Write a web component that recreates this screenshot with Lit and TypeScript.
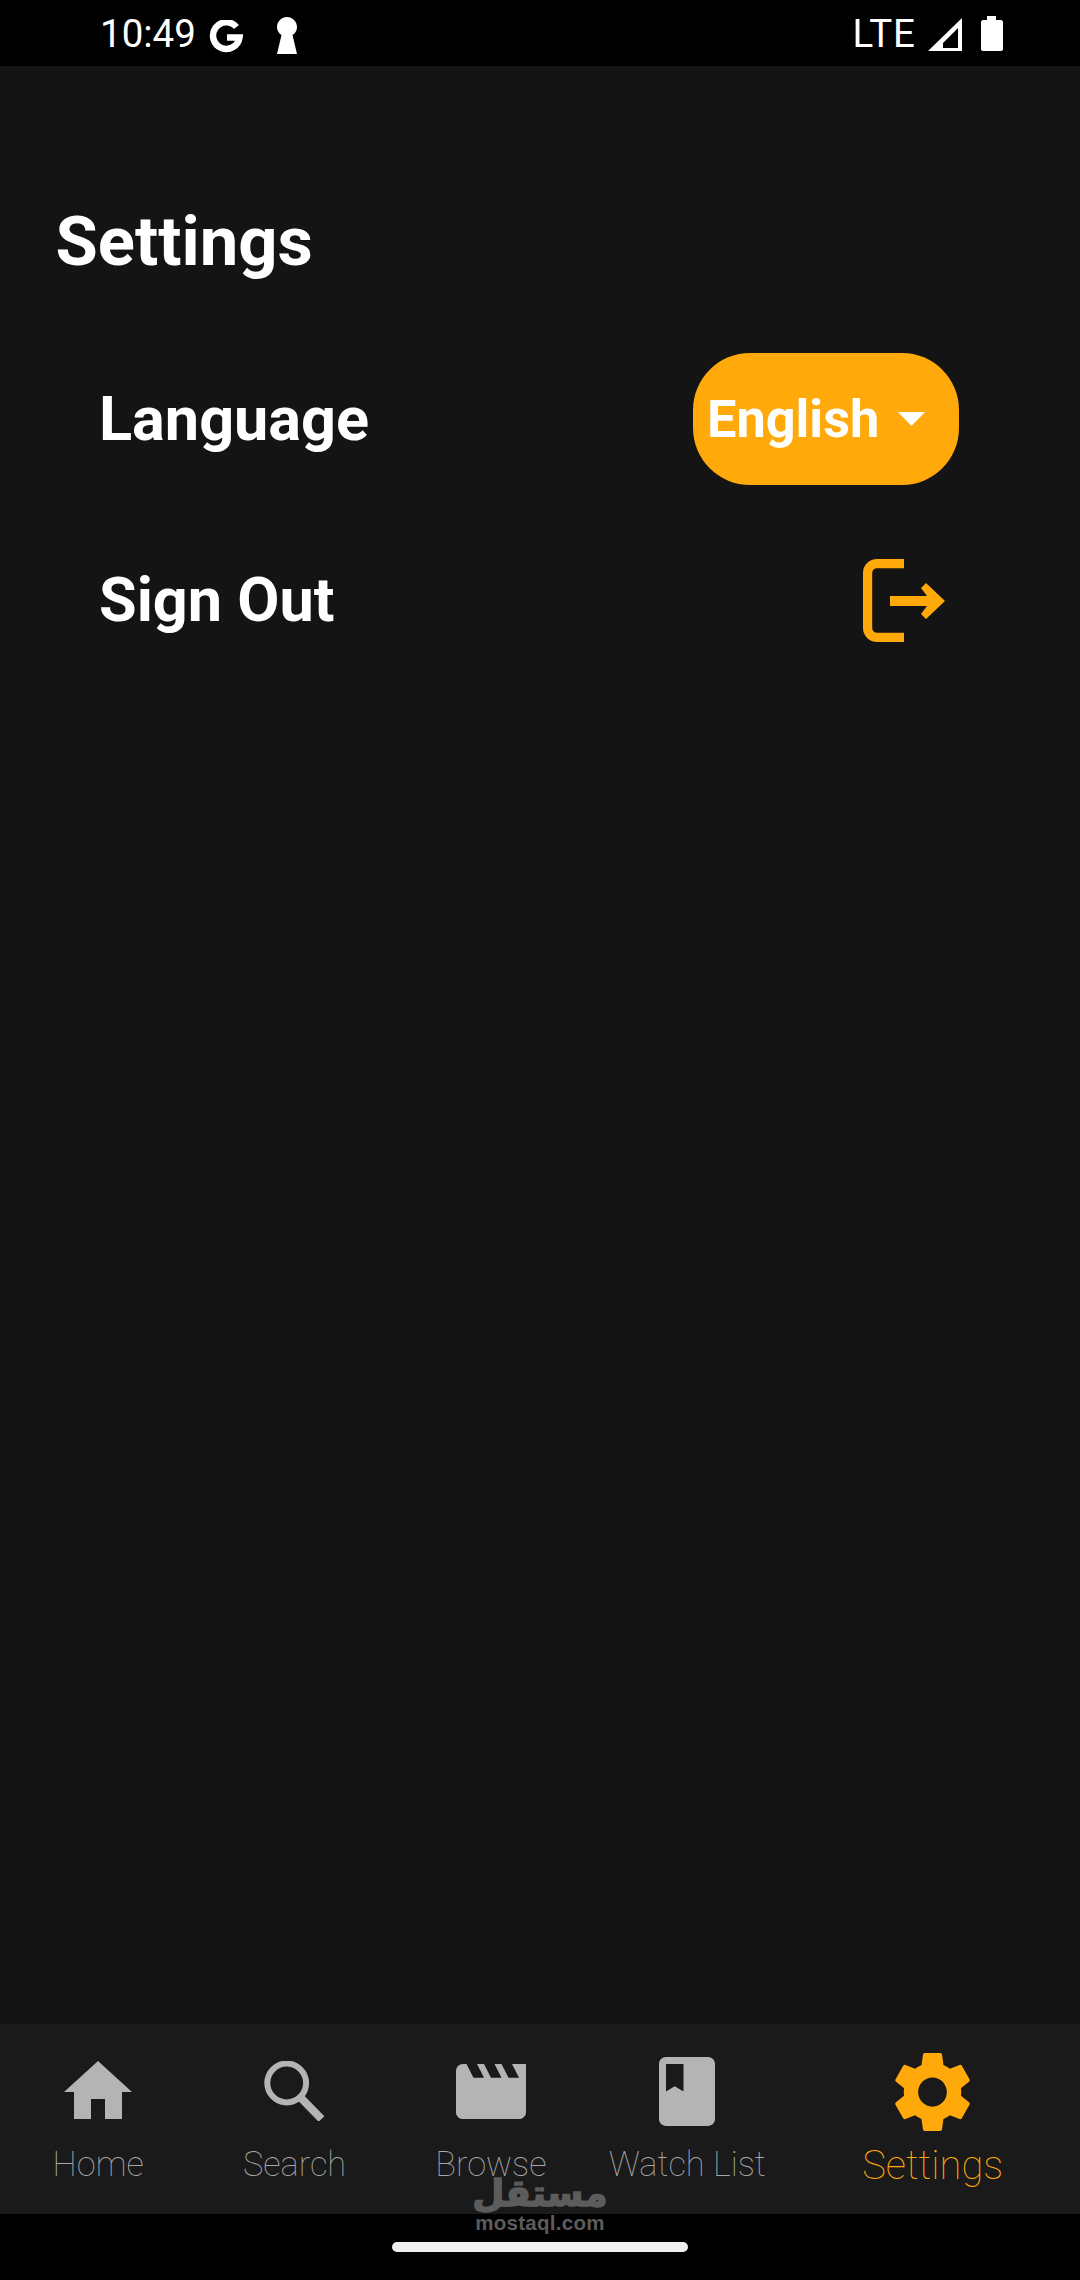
import { LitElement, html, css } from "lit";
import { customElement } from "lit/decorators.js";

const gear = "M19.14,12.94c0.04-0.3,0.06-0.61,0.06-0.94c0-0.32-0.02-0.64-0.07-0.94l2.03-1.58c0.18-0.14,0.23-0.41,0.12-0.61 l-1.92-3.32c-0.12-0.22-0.37-0.29-0.59-0.22l-2.39,0.96c-0.5-0.38-1.03-0.7-1.62-0.94L14.4,2.81c-0.04-0.24-0.24-0.41-0.48-0.41 h-3.84c-0.24,0-0.43,0.17-0.47,0.41L9.25,5.35C8.66,5.59,8.12,5.92,7.63,6.29L5.24,5.33c-0.22-0.08-0.47,0-0.59,0.22L2.74,8.87 C2.62,9.08,2.66,9.34,2.86,9.48l2.03,1.58C4.84,11.36,4.8,11.69,4.8,12s0.02,0.64,0.07,0.94l-2.03,1.58 c-0.18,0.14-0.23,0.41-0.12,0.61l1.92,3.32c0.12,0.22,0.37,0.29,0.59,0.22l2.39-0.96c0.5,0.38,1.03,0.7,1.62,0.94l0.36,2.54 c0.05,0.24,0.24,0.41,0.48,0.41h3.84c0.24,0,0.44-0.17,0.47-0.41l0.36-2.54c0.59-0.24,1.13-0.56,1.62-0.94l2.39,0.96 c0.22,0.08,0.47,0,0.59-0.22l1.92-3.32c0.12-0.22,0.07-0.47-0.12-0.61L19.14,12.94z M12,15.6c-1.98,0-3.6-1.62-3.6-3.6 s1.62-3.6,3.6-3.6s3.6,1.62,3.6,3.6S13.98,15.6,12,15.6z";

@customElement("app-root")
export class AppRoot extends LitElement {
  static styles = css`
    :host { display: block; width: 1080px; height: 2280px; background: #141414; font-family: Roboto, sans-serif; color: #fff; position: relative; overflow: hidden; }
    svg { display: block; flex: none; }
    .page { display: flex; flex-direction: column; height: 2280px; }
    .status { height: 66px; background: #000; display: flex; align-items: center; padding: 0 77px 0 100px; flex: none; }
    .time { font-size: 38.5px; line-height: 67px; width: 109px; }
    .g { margin-top: 7px; }
    .key { margin: 5px 0 0 34px; }
    .spacer { flex: 1; }
    .lte { font-size: 38.5px; line-height: 67px; letter-spacing: 1px; }
    .signal { margin: 3px 0 0 12px; }
    .batt { margin: 1px 0 0 19px; }
    .main { flex: 1; display: flex; flex-direction: column; padding: 0 121px 0 99px; }
    h1 { margin: 138px 0 0 -43.500px; font-size: 68.75px; line-height: 76px; font-weight: 700; }
    .row { display: flex; align-items: center; justify-content: space-between; font-size: 61.200px; font-weight: 700; }
    .lang { margin-top: 73px; height: 132px; }
    .signout { margin-top: 70px; height: 90px; }
    .pill { width: 266px; height: 132px; box-sizing: border-box; border-radius: 57px; background: #ffa90b; display: flex; align-items: center; padding-left: 14px; font-size: 52.25px; }
    .tri { margin-left: 19px; }
    .out { margin-right: 14px; }
    .nav { height: 190px; flex: none; background: #1a1a1a; display: flex; }
    .item { flex: 1; display: flex; flex-direction: column; align-items: center; color: #a8a8a8; font-weight: 100; font-size: 34.4px; }
    .item.wide { flex: 1.5; color: #ffa90b; font-size: 40px; }
    .box { height: 119px; box-sizing: border-box; flex: none; fill: #b4b4b4; }
    .wide .box { fill: #ffa90b; height: 121px; }
    .t37 { padding-top: 37px; }
    .t40 { padding-top: 40px; }
    .t33 { padding-top: 33px; }
    .t29 { padding-top: 29px; }
    .label { line-height: 42px; white-space: nowrap; }
    .bottom { height: 66px; flex: none; background: #000; display: flex; justify-content: center; padding-top: 28px; box-sizing: border-box; }
    .bar { width: 296px; height: 10px; border-radius: 5px; background: #f0f0f0; }
    .mark { position: absolute; left: 440px; width: 200px; top: 2177px; text-align: center; color: #5c5c5c; }
    .ar { font-family: "DejaVu Sans", sans-serif; font-weight: 700; font-size: 37px; line-height: 34px; -webkit-text-stroke: 1.500px #5c5c5c; }
    .dom { font-family: "Liberation Sans", sans-serif; font-weight: 700; font-size: 20.5px; line-height: 22px; letter-spacing: .3px; margin-top: 1px; }
  `;

  render() {
    return html`
      <div class="page">
        <div class="status">
          <span class="time">10:49</span>
          <svg class="g" width="34" height="33" viewBox="0 0 34 33"><path d="M27.500 7A13.300 13.300 0 1 0 30.500 17.500H18" fill="none" stroke="#fff" stroke-width="6.500"/></svg>
          <svg class="key" width="20" height="37" viewBox="0 0 20 37"><path d="M10 0C15.500 0 20 4.500 20 10C20 13.500 18.500 16 15.500 18L20 37H0L4.500 18C1.500 16 0 13.500 0 10C0 4.500 4.500 0 10 0Z" fill="#fff"/></svg>
          <span class="spacer"></span>
          <span class="lte">LTE</span>
          <svg class="signal" width="34" height="33" viewBox="0 0 34 33"><path d="M34 0V33H0ZM30 10 15 25V30H30Z" fill="#fff" fill-rule="evenodd"/></svg>
          <svg class="batt" width="22" height="35" viewBox="0 0 22 35"><path d="M6 0H15V4H20C21 4 22 5 22 6V33C22 34 21 35 20 35H2C1 35 0 34 0 33V6C0 5 1 4 2 4H6Z" fill="#fff"/></svg>
        </div>
        <div class="main">
          <h1>Settings</h1>
          <div class="row lang">
            <span>Language</span>
            <div class="pill">
              <span>English</span>
              <svg class="tri" width="27" height="14" viewBox="0 0 27 14"><path d="M0 0H27L13.500 14Z" fill="#fff"/></svg>
            </div>
          </div>
          <div class="row signout">
            <span>Sign Out</span>
            <svg class="out" width="82" height="83" viewBox="0 0 82 83">
              <path d="M41 4.600H14A9.400 9.400 0 0 0 4.600 14V69A9.400 9.400 0 0 0 14 78.400H41" fill="none" stroke="#ffa90b" stroke-width="9.200"/>
              <path d="M27 37H64L58 29 63 24 82 42 63 60 58 55 64 47H27Z" fill="#ffa90b"/>
            </svg>
          </div>
        </div>
        <nav class="nav">
          <div class="item">
            <div class="box t37"><svg width="68" height="58" viewBox="0 0 68 58"><path d="M34 0 68 31H58V58H41V38H27V58H10V31H0Z"/></svg></div>
            <span class="label">Home</span>
          </div>
          <div class="item">
            <div class="box t37"><svg width="61" height="60" viewBox="0 0 61 60"><circle cx="22.700" cy="22" r="19.400" fill="none" stroke="#b4b4b4" stroke-width="6"/><path d="M37 37 57.500 58" fill="none" stroke="#b4b4b4" stroke-width="8"/></svg></div>
            <span class="label">Search</span>
          </div>
          <div class="item">
            <div class="box t40"><svg width="70" height="55" viewBox="2 4 20 16" preserveAspectRatio="none"><path d="M18 4l2 4h-3l-2-4h-2l2 4h-3l-2-4H8l2 4H7L5 4H4c-1.100 0-1.990.9-1.990 2L2 18c0 1.100.9 2 2 2h16c1.100 0 2-.9 2-2V4h-4z"/></svg></div>
            <span class="label">Browse</span>
          </div>
          <div class="item">
            <div class="box t33"><svg width="56" height="69" viewBox="4 2 16 20" preserveAspectRatio="none"><path d="M18 2H6c-1.100 0-2 .9-2 2v16c0 1.100.9 2 2 2h12c1.100 0 2-.9 2-2V4c0-1.100-.9-2-2-2zM6 4h5v8l-2.500-1.500L6 12V4z"/></svg></div>
            <span class="label">Watch List</span>
          </div>
          <div class="item wide">
            <div class="box t29"><svg width="75" height="78" viewBox="2.600 2.400 18.800 19.200" preserveAspectRatio="none"><path d="${gear}"/></svg></div>
            <span class="label">Settings</span>
          </div>
        </nav>
        <div class="bottom"><div class="bar"></div></div>
      </div>
      <div class="mark">
        <div class="ar" dir="rtl">مستقل</div>
        <div class="dom">mostaql.com</div>
      </div>
    `;
  }
}
